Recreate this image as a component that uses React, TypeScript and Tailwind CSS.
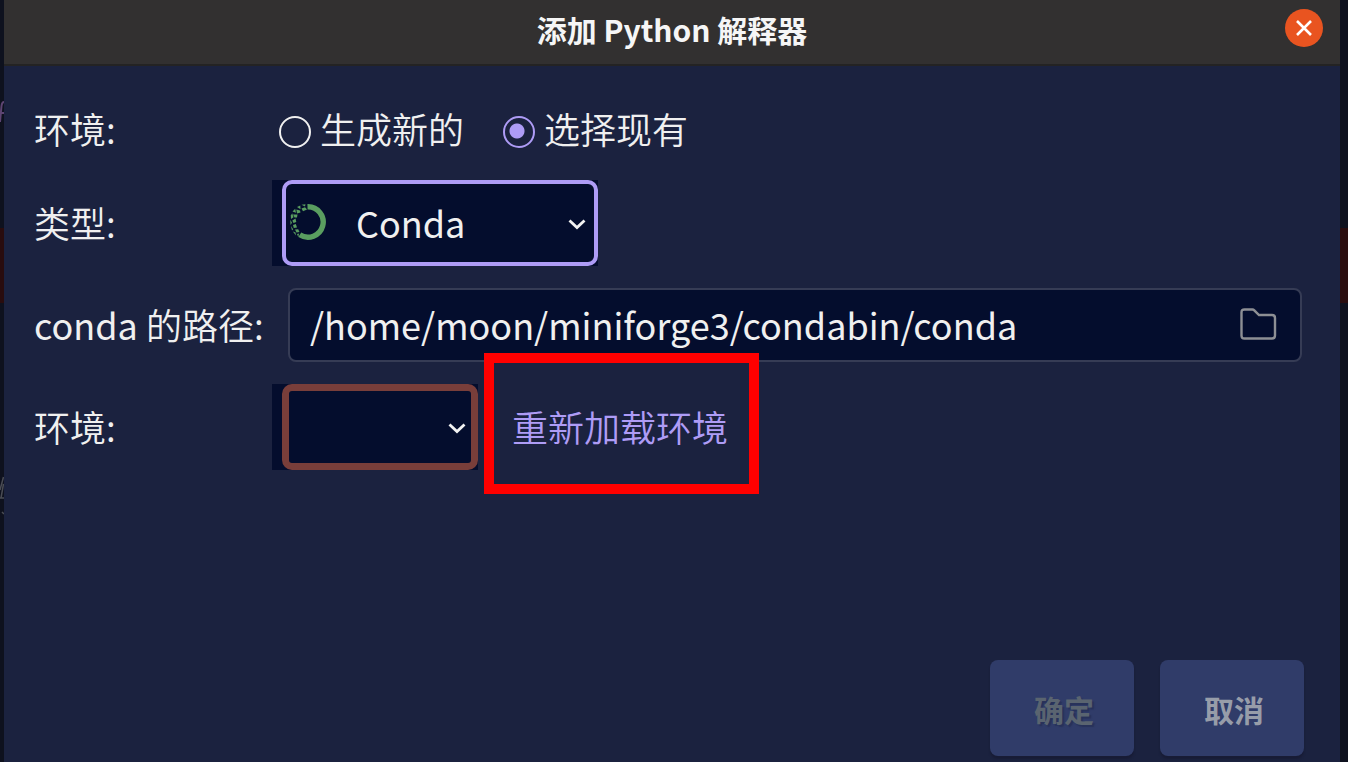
import React, { useState } from 'react';

// hanzi are set in the lighter cut, latin text and bold titles in the normal one
const cjkLight = "font-['Noto_Sans_CJK_SC_DemiLight','Noto_Sans_CJK_SC',sans-serif]";
const cjk = "font-['Noto_Sans_CJK_SC',sans-serif]";

const Chevron: React.FC = () => (
  <svg className="pointer-events-none absolute right-[11px] top-[38px]" width="20" height="14" viewBox="0 0 20 14" fill="none" aria-hidden="true">
    <path d="M2.5 2.5L10 9.5L17.5 2.5" stroke="#f2f2f2" strokeWidth="2.8" />
  </svg>
);

// solid arc on the right, scattered scales on the left
const CondaRing: React.FC = () => (
  <svg className="pointer-events-none absolute left-[18px] top-[23px]" width="36" height="38" viewBox="0 0 36 38" aria-hidden="true">
    <path d="M17.5 3.8A15.2 15.2 0 1 1 9.8 31.8" fill="none" stroke="#5a9e60" strokeWidth="5.4" />
    <g fill="#5a9e60">
      <path d="M11.5 1.8L15.5 1.3L15 3.5Z" />
      <path d="M11.5 5.5L15 4.2L17 6.5L13 8.2Z" />
      <path d="M7 4L10.3 2.4L10.5 6.3Z" />
      <path d="M6.300 6.500L10 7.500L10.500 9.500L7 10.500Z" />
      <path d="M2.500 8.500L5.200 5.800L6 9.800Z" />
      <path d="M3 11.500L7.500 11.500L7 14.500L4.500 14.500Z" />
      <path d="M0.800 12.500L2.200 10.300L3.500 14.200L1 16Z" />
      <path d="M2.300 17.500L5.500 15.500L6.300 19L3.500 20Z" />
      <path d="M0.300 16.800L2 19.800L0.500 22Z" />
      <path d="M3 22L5.800 21L7 24.500L3.800 25Z" />
      <path d="M0.800 22.800L3.200 26.300L2 27.500Z" />
      <path d="M5 26.500L8.200 26.200L9.500 29L6.500 29.500Z" />
      <path d="M2.800 28.500L5.500 29.500L6 32.500Z" />
      <path d="M7 31L9.200 30.500L8.200 34Z" />
    </g>
  </svg>
);

const FolderIcon: React.FC = () => (
  <svg width="38" height="34" viewBox="0 0 38 34" fill="none" aria-hidden="true">
    <path d="M2.5 5.500Q2.500 2.500 5.500 2.500H13.500Q14.500 2.500 15.300 3.300L20 8H33Q36 8 36 11V28.500Q36 31.500 33 31.500H5.500Q2.500 31.500 2.500 28.500Z" stroke="#8d8f94" strokeWidth="2.4" />
  </svg>
);

const radioClass =
  'mt-[7px] size-8 shrink-0 appearance-none rounded-full border-2 border-[#f0f0f0] checked:border-[#ae9cf6] checked:bg-[radial-gradient(circle_at_12px_13px,#ae9cf6_7px,transparent_8px)]';

const App: React.FC = () => {
  const [mode, setMode] = useState<'new' | 'existing'>('existing');
  const [type, setType] = useState('Conda');
  const [path, setPath] = useState('/home/moon/miniforge3/condabin/conda');

  return (
    <div className={`flex min-h-screen bg-[#0e111e] text-[36px] leading-[52px] text-[#f0f0f0] ${cjkLight}`}>
      {/* editor behind the dialog */}
      <div className="flex w-1 shrink-0 flex-col pt-[100px]">
        <svg width="4" height="26" viewBox="0 0 4 26" fill="none" aria-hidden="true">
          <path d="M4 2Q2 2 1.500 6L0 22M0 13H4" stroke="#5d4472" strokeWidth="2" />
        </svg>
        <div className="mt-[102px] h-[75px] bg-[#290c0e]" />
        <svg className="mt-[173px]" width="4" height="40" viewBox="0 0 4 40" fill="none" aria-hidden="true">
          <path d="M3.500 1L0 14M3.500 8L1 22M0 22H4M2 36L4 38" stroke="#4a4c54" strokeWidth="1.500" />
        </svg>
      </div>

      <div className="flex min-w-0 flex-1 flex-col bg-[#1b223f]">
        <header className="grid grid-cols-[1fr_auto_1fr] items-center border-b-2 border-[#242323] bg-[#323030] px-[17px] pt-[9px] pb-[17px]">
          <h1 className={`col-start-2 pt-[2px] text-[30px] leading-[36px] font-bold text-[#f6f6f6] ${cjk}`}>添加 Python 解释器</h1>
          <button aria-label="关闭" className="flex size-[38px] items-center justify-center justify-self-end rounded-full bg-[#e95420]">
            <svg width="18" height="18" viewBox="0 0 18 18" aria-hidden="true">
              <path d="M2 2L16 16M16 2L2 16" stroke="#fff" strokeWidth="2.6" />
            </svg>
          </button>
        </header>

        <form className="flex flex-1 flex-col" onSubmit={e => e.preventDefault()}>
          <div className="flex flex-col gap-[22px] pt-9 pr-[38px] pl-[30px]">
            <div className="flex items-center pb-1" role="radiogroup" aria-labelledby="mode-label">
              <span id="mode-label" className="w-[238px] shrink-0">环境:</span>
              <label className="ml-[7px] flex items-center gap-[9px]">
                <input type="radio" name="mode" checked={mode === 'new'} onChange={() => setMode('new')} className={radioClass} />
                生成新的
              </label>
              <label className="ml-[39px] flex items-center gap-[9px]">
                <input type="radio" name="mode" checked={mode === 'existing'} onChange={() => setMode('existing')} className={radioClass} />
                选择现有
              </label>
            </div>

            <div className="flex items-center">
              <label htmlFor="type" className="w-[238px] shrink-0 pb-0.5">类型:</label>
              <div className="relative bg-[#040d2d] pl-[10px]">
                <select id="type" value={type} onChange={e => setType(e.target.value)} className={`block h-[86px] w-[316px] appearance-none rounded-[10px] border-4 border-[#ae9cf6] bg-[#040d2d] pb-0.5 pl-[70px] outline-none ${cjk}`}>
                  <option>Conda</option>
                </select>
                <CondaRing />
                <Chevron />
              </div>
            </div>

            <div className="flex items-center">
              <label htmlFor="path" className="w-[238px] shrink-0 pb-0.5 whitespace-nowrap">
                <span className={cjk}>conda </span>的路径:
              </label>
              <div className="ml-4 flex h-[74px] min-w-0 flex-1 items-center rounded-lg border-2 border-[#363c55] bg-[#040d2d] pr-[23px] pb-0.5 pl-5">
                <input id="path" type="text" value={path} onChange={e => setPath(e.target.value)} className={`min-w-0 flex-1 bg-transparent outline-none ${cjk}`} />
                <button type="button" aria-label="浏览">
                  <FolderIcon />
                </button>
              </div>
            </div>

            <div className="flex items-center">
              <label htmlFor="env" className="w-[238px] shrink-0 pb-0.5">环境:</label>
              <div className="relative bg-[#040d2d] pl-[10px]">
                <select id="env" className="block h-[86px] w-[196px] appearance-none rounded-[10px] border-[7px] border-[#793e3a] bg-[#040d2d] outline-none">
                  <option value=""></option>
                </select>
                <Chevron />
              </div>
              <a href="#reload" className="relative ml-[34px] pb-0.5 text-[#ae9cf6]">
                重新加载环境
                <span className="pointer-events-none absolute -top-[47px] -right-[31px] -bottom-[40px] -left-[28px] border-[10px] border-[#ff0000]" />
              </a>
            </div>
          </div>

          <div className={`mt-auto flex justify-end gap-[26px] pr-9 pb-[6px] text-[30px] leading-[44px] font-bold ${cjk}`}>
            <button disabled className="h-24 w-36 rounded-lg bg-[#303c69] pt-0.5 pl-1 text-[#5a6470] shadow-[0_3px_2px_#181c36] [text-shadow:2px_2px_1px_#28325a]">确定</button>
            <button type="button" className="h-24 w-36 rounded-lg bg-[#303c69] pt-0.5 pl-1 text-[#979da9] shadow-[0_3px_2px_#181c36]">取消</button>
          </div>
        </form>
      </div>

      <div className="w-2 shrink-0 pt-[228px]">
        <div className="h-[75px] bg-[#290c0e]" />
      </div>
    </div>
  );
};

export default App;
